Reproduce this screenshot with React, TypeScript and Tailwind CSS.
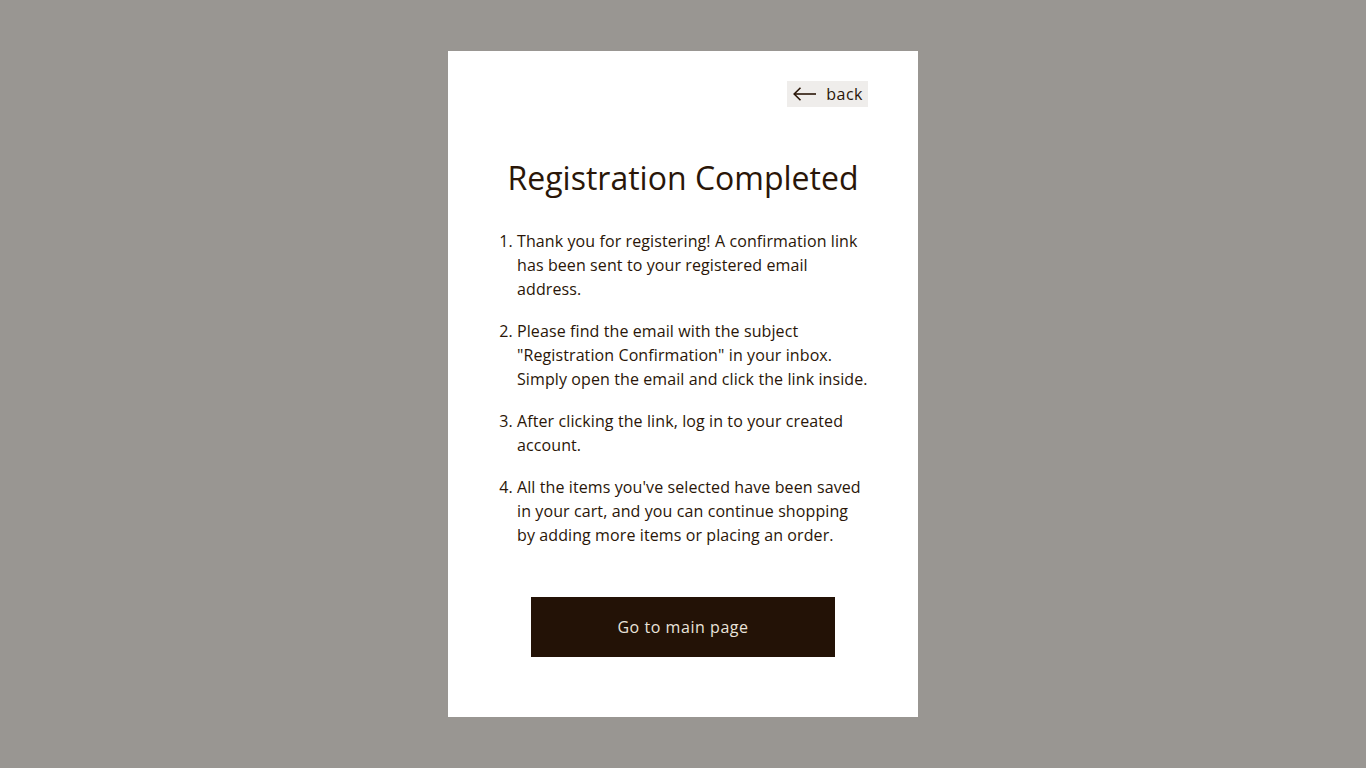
import React from "react";

export default function App() {
  const items = [
    "Thank you for registering! A confirmation link has been sent to your registered email address.",
    'Please find the email with the subject "Registration Confirmation" in your inbox. Simply open the email and click the link inside.',
    "After clicking the link, log in to your created account.",
    "All the items you've selected have been saved in your cart, and you can continue shopping by adding more items or placing an order.",
  ];
  return (
    <div
      className="min-h-screen w-full bg-[#999692] flex justify-center pt-[51px]"
      style={{ fontFamily: '"Open Sans", sans-serif' }}
    >
      <div className="w-[470px] h-[666px] bg-white px-[50px] pt-[30px] pb-[60px] flex flex-col text-[#2a1608]">
        <div className="flex justify-end">
          <button className="h-[26px] flex items-center bg-[#efedeb] pl-[6px] pr-[5px] text-[16px] text-[#2a1608]">
            <svg width="23" height="14" viewBox="0 0 23 14" fill="none" stroke="#2a1608" strokeWidth="1.6">
              <path d="M1 7h22" />
              <path d="M7.5 0.8L1.2 7l6.3 6.2" />
            </svg>
            <span className="ml-[10px] leading-[26px] tracking-[0.5px]">back</span>
          </button>
        </div>
        <h1 className="mt-[47px] text-center text-[32px] leading-[48px] text-[#2a1608]">
          Registration Completed
        </h1>
        <ol className="mt-[27px] list-decimal list-outside pl-[19px] text-[16px] leading-[24px] tracking-[0.1px]">
          {items.map((t, i) => (
            <li key={i} className={i > 0 ? "mt-[18px]" : ""}>
              {t}
            </li>
          ))}
        </ol>
        <div className="mt-[50px] flex justify-center">
          <button className="w-[304px] h-[60px] bg-[#231206] text-[#e9e2da] text-[16px] tracking-[0.55px]">
            Go to main page
          </button>
        </div>
      </div>
    </div>
  );
}
